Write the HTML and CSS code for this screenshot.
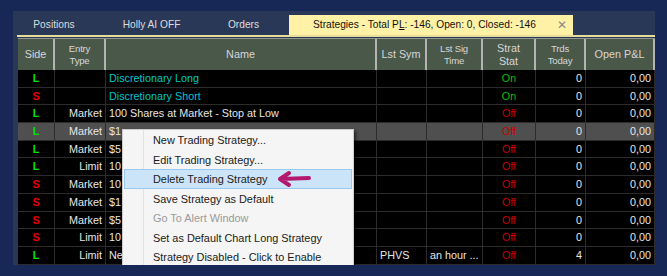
FILE: index.html
```html
<!DOCTYPE html>
<html lang="en">
<head>
    <meta charset="UTF-8">
    <title>Strategies</title>
    <link rel="stylesheet" href="styles.css">
</head>
<body>
    <div class="window">
        <div class="tabs">
            <div class="tab tab-positions">Positions</div>
            <div class="tab tab-holly">Holly AI OFF</div>
            <div class="tab tab-orders">Orders</div>
            <div class="tab tab-active">Strategies - Total P<u>L</u>: -146, Open: 0, Closed: -146<span class="close">&#x2715;</span></div>
        </div>
        <div class="tab-line"></div>

        <div class="grid">
            <div class="hd">Side</div>
            <div class="hd small">Entry<br>Type</div>
            <div class="hd">Name</div>
            <div class="hd">Lst Sym</div>
            <div class="hd small">Lst Sig<br>Time</div>
            <div class="hd">Strat<br>Stat</div>
            <div class="hd small">Trds<br>Today</div>
            <div class="hd">Open P&amp;L</div>

            <div class="c side long">L</div><div class="c"></div><div class="c name disc">Discretionary Long</div><div class="c"></div><div class="c"></div><div class="c stat on">On</div><div class="c num">0</div><div class="c num">0,00</div>
            <div class="c side short">S</div><div class="c"></div><div class="c name disc">Discretionary Short</div><div class="c"></div><div class="c"></div><div class="c stat on">On</div><div class="c num">0</div><div class="c num">0,00</div>
            <div class="c side long">L</div><div class="c num">Market</div><div class="c name">100 Shares at Market - Stop at Low</div><div class="c"></div><div class="c"></div><div class="c stat off">Off</div><div class="c num">0</div><div class="c num">0,00</div>
            <div class="c sel side long">L</div><div class="c sel num">Market</div><div class="c sel name">$1</div><div class="c sel"></div><div class="c sel"></div><div class="c sel stat off">Off</div><div class="c sel num">0</div><div class="c sel num">0,00</div>
            <div class="c side long">L</div><div class="c num">Market</div><div class="c name">$5</div><div class="c"></div><div class="c"></div><div class="c stat off">Off</div><div class="c num">0</div><div class="c num">0,00</div>
            <div class="c side long">L</div><div class="c num">Limit</div><div class="c name">10</div><div class="c"></div><div class="c"></div><div class="c stat off">Off</div><div class="c num">0</div><div class="c num">0,00</div>
            <div class="c side short">S</div><div class="c num">Market</div><div class="c name">10</div><div class="c"></div><div class="c"></div><div class="c stat off">Off</div><div class="c num">0</div><div class="c num">0,00</div>
            <div class="c side short">S</div><div class="c num">Market</div><div class="c name">$1</div><div class="c"></div><div class="c"></div><div class="c stat off">Off</div><div class="c num">0</div><div class="c num">0,00</div>
            <div class="c side short">S</div><div class="c num">Market</div><div class="c name">$5</div><div class="c"></div><div class="c"></div><div class="c stat off">Off</div><div class="c num">0</div><div class="c num">0,00</div>
            <div class="c side short">S</div><div class="c num">Limit</div><div class="c name">10</div><div class="c"></div><div class="c"></div><div class="c stat off">Off</div><div class="c num">0</div><div class="c num">0,00</div>
            <div class="c side long">L</div><div class="c num">Limit</div><div class="c name">Ne</div><div class="c">PHVS</div><div class="c">an hour ...</div><div class="c stat off">Off</div><div class="c num">4</div><div class="c num">0,00</div>
        </div>

        <div class="menu">
            <div class="item">New Trading Strategy...</div>
            <div class="item">Edit Trading Strategy...</div>
            <div class="item hot">Delete Trading Strategy
                <svg class="pointer" width="40" height="18" viewBox="0 0 40 18">
                    <path d="M34 8 L5 9 M5 9 L14 3 M5 9 L14 15" fill="none" stroke="#b3186f" stroke-width="4" stroke-linecap="round" stroke-linejoin="round"/>
                </svg>
            </div>
            <div class="item">Save Strategy as Default</div>
            <div class="item disabled">Go To Alert Window</div>
            <div class="item">Set as Default Chart Long Strategy</div>
            <div class="item">Strategy Disabled - Click to Enable</div>
        </div>
    </div>
</body>
</html>
```

FILE: styles.css
```css
body {
    margin: 0;
    background-color: #172856;
    font-family: "Liberation Sans", Arial, sans-serif;
    font-size: 11px;
    width: 667px;
    height: 276px;
    overflow: hidden;
}
.window {
    position: relative;
    margin: 11px 0 0 13px;
    width: 642px;
    height: 254px;
    background-color: #2a3858;
    overflow: hidden;
}
.tabs {
    display: flex;
    height: 24px;
    padding-left: 4px;
    align-items: flex-end;
    font-size: 10.2px;
}
.tab {
    height: 20px;
    line-height: 20px;
    color: #dcdcdc;
    text-align: center;
}
.tab-positions { width: 74px; }
.tab-holly { width: 121px; }
.tab-orders { width: 63px; }
.tab-active {
    margin-left: 14px;
    width: 260px;
    padding-left: 24px;
    text-align: left;
    background-color: #fff1a6;
    color: #111;
    position: relative;
}
.tab-active u {
    text-decoration-thickness: 1px;
}
.close {
    position: absolute;
    right: 6px;
    top: 0;
    color: #8a8a8a;
    font-size: 12px;
}
.tab-line {
    margin-left: 4px;
    height: 2px;
    background-color: #e8dc9a;
}
.grid {
    display: grid;
    grid-template-columns: 37px 51px 271px 50px 56px 53px 50px 69px;
    grid-auto-rows: 17.7px;
    grid-template-rows: 31px;
    margin: 1px 0 0 5px;
    background-color: #000;
    border-top: 1px solid #8e968e;
}
.hd {
    background-color: #4a584a;
    color: #d6d6d6;
    border-right: 2px solid #b4b4b4;
    display: flex;
    align-items: center;
    justify-content: center;
    text-align: center;
    line-height: 13px;
    font-size: 10.8px;
}
.hd:last-child { border-right: none; }
.hd.small {
    font-size: 9.6px;
    line-height: 12px;
    letter-spacing: -0.2px;
}
.c {
    border-right: 1px solid #2c2c2c;
    border-bottom: 1px solid #2c2c2c;
    color: #e6e6e6;
    padding: 0 3px;
    line-height: 17px;
    white-space: nowrap;
    overflow: hidden;
    font-size: 10.8px;
}
.c.sel { background-color: #4f4f4f; }
.side { text-align: center; font-weight: bold; }
.long { color: #00e000; }
.short { color: #e40000; }
.disc { color: #00c6cc; }
.num { text-align: right; }
.stat { text-align: center; }
.on { color: #00c000; }
.off { color: #c80000; }
.menu {
    position: absolute;
    left: 109px;
    top: 118px;
    width: 230px;
    height: 150px;
    background-color: #f5f5f5;
    border: 1px solid #cccccc;
    box-shadow: 2px 2px 3px rgba(0, 0, 0, 0.55);
    font-size: 10.9px;
}
.menu::before {
    content: "";
    position: absolute;
    left: 20px;
    top: 0;
    bottom: 0;
    border-left: 1px solid #e2e2e2;
}
.item {
    position: relative;
    height: 19.5px;
    line-height: 19.5px;
    padding-left: 28px;
    margin: 0 1px;
    color: #1a1a1a;
    border: 1px solid transparent;
    box-sizing: border-box;
}
.item.hot {
    background-color: #cce4f7;
    border-color: #99c9ef;
}
.item.disabled { color: #9a9a9a; }
.pointer {
    position: absolute;
    left: 150px;
    top: 0;
}
```
